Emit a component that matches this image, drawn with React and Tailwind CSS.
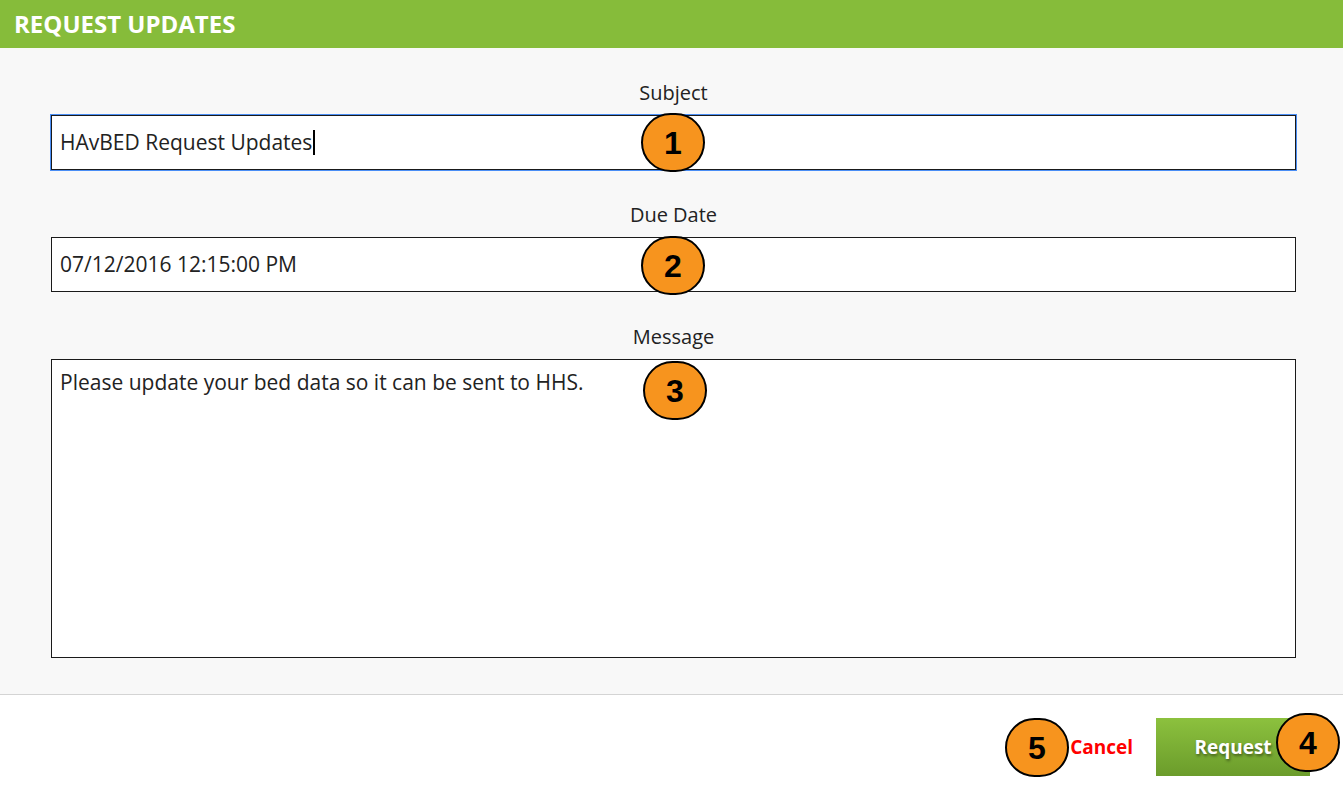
import React from 'react';

function Marker({ n, className }) {
  return (
    <div
      className={`absolute w-[64px] h-[59px] rounded-full bg-[#f7941e] border-2 border-black grid place-items-center text-[32px] font-bold text-black leading-none ${className}`}
      style={{ fontFamily: '"Liberation Sans", Arial, sans-serif' }}
    >
      {n}
    </div>
  );
}

function Field({ label, children, tall, focused }) {
  return (
    <div className="flex flex-col">
      <div className="text-center text-[20px] leading-6 text-[#222] mb-[10px]">{label}</div>
      <div
        className={`bg-white border border-[#1a1a1a] px-[8px] text-[21px] text-[#222] ${tall ? 'h-[299px] pt-[7px]' : 'h-[55px] flex items-center'} ${focused ? 'ring-1 ring-[#4a8ef5]' : ''}`}
      >
        {children}
      </div>
    </div>
  );
}

export default function App() {
  return (
    <div className="relative w-[1343px] h-[797px] bg-white overflow-hidden" style={{ fontFamily: '"Open Sans", "Noto Sans", sans-serif' }}>
      <div className="h-12 bg-[#86bc3a] flex items-center px-[14px]">
        <h1 className="text-white font-bold text-[24px]">REQUEST UPDATES</h1>
      </div>

      <div className="bg-[#f8f8f8] border-b border-[#d4d4d4] px-[51px] pt-[33px] pb-[36px] flex flex-col gap-[33px] pr-[47px]">
        <Field label="Subject" focused>
          <span>HAvBED Request Updates</span>
          <span className="inline-block w-[2px] h-[25px] bg-black ml-[1px]" />
        </Field>
        <Field label="Due Date">
          <span>07/12/2016 12:15:00 PM</span>
        </Field>
        <Field label="Message" tall>
          <span>Please update your bed data so it can be sent to HHS.</span>
        </Field>
      </div>

      <div className="flex items-center justify-end gap-[23px] pr-[33px] pt-[23px]">
        <button className="text-[#ff0000] font-bold text-[19px]">Cancel</button>
        <button
          className="w-[154px] h-[58px] bg-gradient-to-b from-[#8cc13e] to-[#6b9c2b] text-white font-bold text-[19px]"
          style={{ textShadow: '1px 2px 3px rgba(0,0,0,0.45)' }}
        >
          Request
        </button>
      </div>

      <Marker n="1" className="left-[641px] top-[113px]" />
      <Marker n="2" className="left-[641px] top-[236px]" />
      <Marker n="3" className="left-[643px] top-[361px]" />
      <Marker n="4" className="left-[1276px] top-[713px]" />
      <Marker n="5" className="left-[1005px] top-[718px]" />
    </div>
  );
}
